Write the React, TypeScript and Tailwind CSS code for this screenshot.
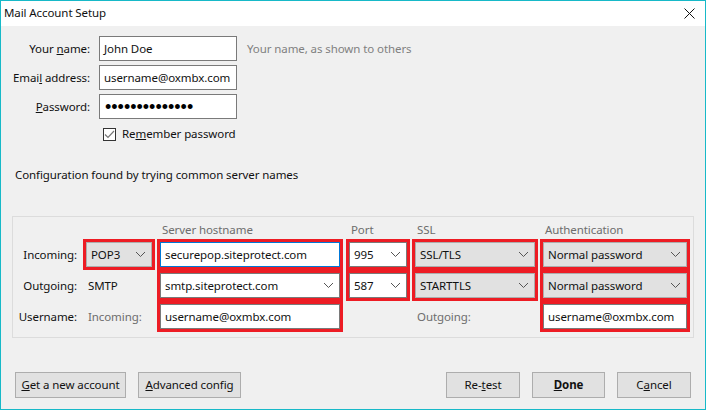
const uiFont = "font-['Noto_Sans',sans-serif]";

const Chevron = () => (
  <svg width="11" height="7" viewBox="0 0 11 7" fill="none" className="shrink-0 -mt-[1px]">
    <path d="M1 1l4.5 4.5L10 1" stroke="#555" strokeWidth="1" />
  </svg>
);

const Input = ({ children, focus = false, chevron = false }: { children: React.ReactNode; focus?: boolean; chevron?: boolean }) => (
  <div className={`h-[25px] flex items-center justify-between pl-[4px] pr-[5px] bg-white border whitespace-nowrap ${focus ? "border-[#0078d7]" : "border-[#7a7a7a]"}`}>
    <span>{children}</span>
    {chevron && <Chevron />}
  </div>
);

const Select = ({ children }: { children: React.ReactNode }) => (
  <div className="h-[25px] flex items-center justify-between pl-[4px] pr-[5px] bg-[#e1e1e1] border border-[#adadad] whitespace-nowrap">
    <span>{children}</span>
    <Chevron />
  </div>
);

const RedBox = ({ children }: { children: React.ReactNode }) => (
  <div className="border-[3px] border-[#ed1c24] flex flex-col gap-[6px] bg-[#ed1c24]">{children}</div>
);

const Head = ({ children }: { children?: React.ReactNode }) => (
  <div className="h-[22px] flex items-end pl-[5px] pb-[1px] text-[#6d6d6d]">{children}</div>
);

const FormRow = ({ label, children }: { label: React.ReactNode; children: React.ReactNode }) => (
  <div className="flex items-center">
    <div className="w-[89px] text-right">{label}</div>
    <div className="ml-[9px] w-[138px]">{children}</div>
  </div>
);

const Btn = ({ children, className = "" }: { children: React.ReactNode; className?: string }) => (
  <button className={`h-[26px] bg-[#e1e1e1] border border-[#adadad] text-center ${className}`}>{children}</button>
);

export default function App() {
  return (
    <div className={`w-[706px] h-[410px] flex flex-col bg-[#f0f0f0] border border-[#17b9c8] text-[11.5px] tracking-[-0.09px] leading-[16px] text-[#111] ${uiFont}`}>
      <div className="h-[25px] shrink-0 bg-white flex items-center justify-between pl-[3px] pr-[10px]">
        <span className="-mt-[1px]">Mail Account Setup</span>
        <svg width="11" height="11" viewBox="0 0 11 11" fill="none">
          <path d="M.5.5l10 10M10.5.5l-10 10" stroke="#111" strokeWidth="1" />
        </svg>
      </div>

      <div className="pt-[10px] flex flex-col gap-[4px]">
        <div className="flex items-center">
          <FormRow label={<>Your <u>n</u>ame:</>}>
            <Input>John Doe</Input>
          </FormRow>
          <span className="ml-[10px] text-[#808080]">Your name, as shown to others</span>
        </div>
        <FormRow label={<>Emai<u>l</u> address:</>}>
          <Input>username@oxmbx.com</Input>
        </FormRow>
        <FormRow label={<><u>P</u>assword:</>}>
          <div className="h-[25px] flex items-center pl-[5px] bg-white border border-[#7a7a7a] font-['Liberation_Sans',sans-serif] text-[18px] tracking-normal text-black whitespace-nowrap">
            ••••••••••••••
          </div>
        </FormRow>
      </div>

      <div className="mt-[8px] ml-[102px] flex items-center h-[14px]">
        <div className="w-[13px] h-[13px] bg-white border border-[#333] flex items-center justify-center">
          <svg width="11" height="9" viewBox="0 0 11 9" fill="none">
            <path d="M1 4.5l3 3L10 1" stroke="#777" strokeWidth="1.2" />
          </svg>
        </div>
        <span className="ml-[6px]">Re<u>m</u>ember password</span>
      </div>

      <div className="mt-[26px] ml-[14px]">Configuration found by trying common server names</div>

      <div className="mt-[33px] ml-[11px] w-[682px] h-[122px] border border-[#dcdcdc] flex">
        <div className="w-[70px] shrink-0 pr-[6px] text-right">
          <div className="h-[25px]" />
          <div className="h-[25px] leading-[25px]">Incoming:</div>
          <div className="mt-[6px] h-[25px] leading-[25px]">Outgoing:</div>
          <div className="mt-[6px] h-[25px] leading-[25px]">Username:</div>
        </div>

        <div className="w-[72px] shrink-0">
          <Head />
          <RedBox><Select>POP3</Select></RedBox>
          <div className="mt-[3px] h-[25px] leading-[25px] pl-[5px]">SMTP</div>
          <div className="mt-[6px] h-[25px] leading-[25px] pl-[5px] text-[#6d6d6d]">Incoming:</div>
        </div>

        <div className="ml-[2px] w-[186px] shrink-0">
          <Head>Server hostname</Head>
          <RedBox>
            <Input focus>securepop.siteprotect.com</Input>
            <Input chevron>smtp.siteprotect.com</Input>
            <Input>username@oxmbx.com</Input>
          </RedBox>
        </div>

        <div className="ml-[3px] w-[64px] shrink-0">
          <Head>Port</Head>
          <RedBox>
            <Input chevron>995</Input>
            <Input chevron>587</Input>
          </RedBox>
        </div>

        <div className="ml-[2px] w-[126px] shrink-0">
          <Head>SSL</Head>
          <RedBox>
            <Select>SSL/TLS</Select>
            <Select>STARTTLS</Select>
          </RedBox>
          <div className="mt-[3px] h-[25px] leading-[25px] pl-[5px] text-[#6d6d6d]">Outgoing:</div>
        </div>

        <div className="ml-[2px] w-[150px] shrink-0">
          <Head>Authentication</Head>
          <RedBox>
            <Select>Normal password</Select>
            <Select>Normal password</Select>
            <Input>username@oxmbx.com</Input>
          </RedBox>
        </div>
      </div>

      <div className="mt-[34px] ml-[14px] mr-[14px] flex">
        <Btn className="w-[111px]"><u>G</u>et a new account</Btn>
        <Btn className="ml-[12px] w-[103px]"><u>A</u>dvanced config</Btn>
        <Btn className="ml-auto w-[74px]">Re-<u>t</u>est</Btn>
        <Btn className="ml-[12px] w-[73px] font-bold"><u>D</u>one</Btn>
        <Btn className="ml-[12px] w-[74px]">C<u>a</u>ncel</Btn>
      </div>
    </div>
  );
}
